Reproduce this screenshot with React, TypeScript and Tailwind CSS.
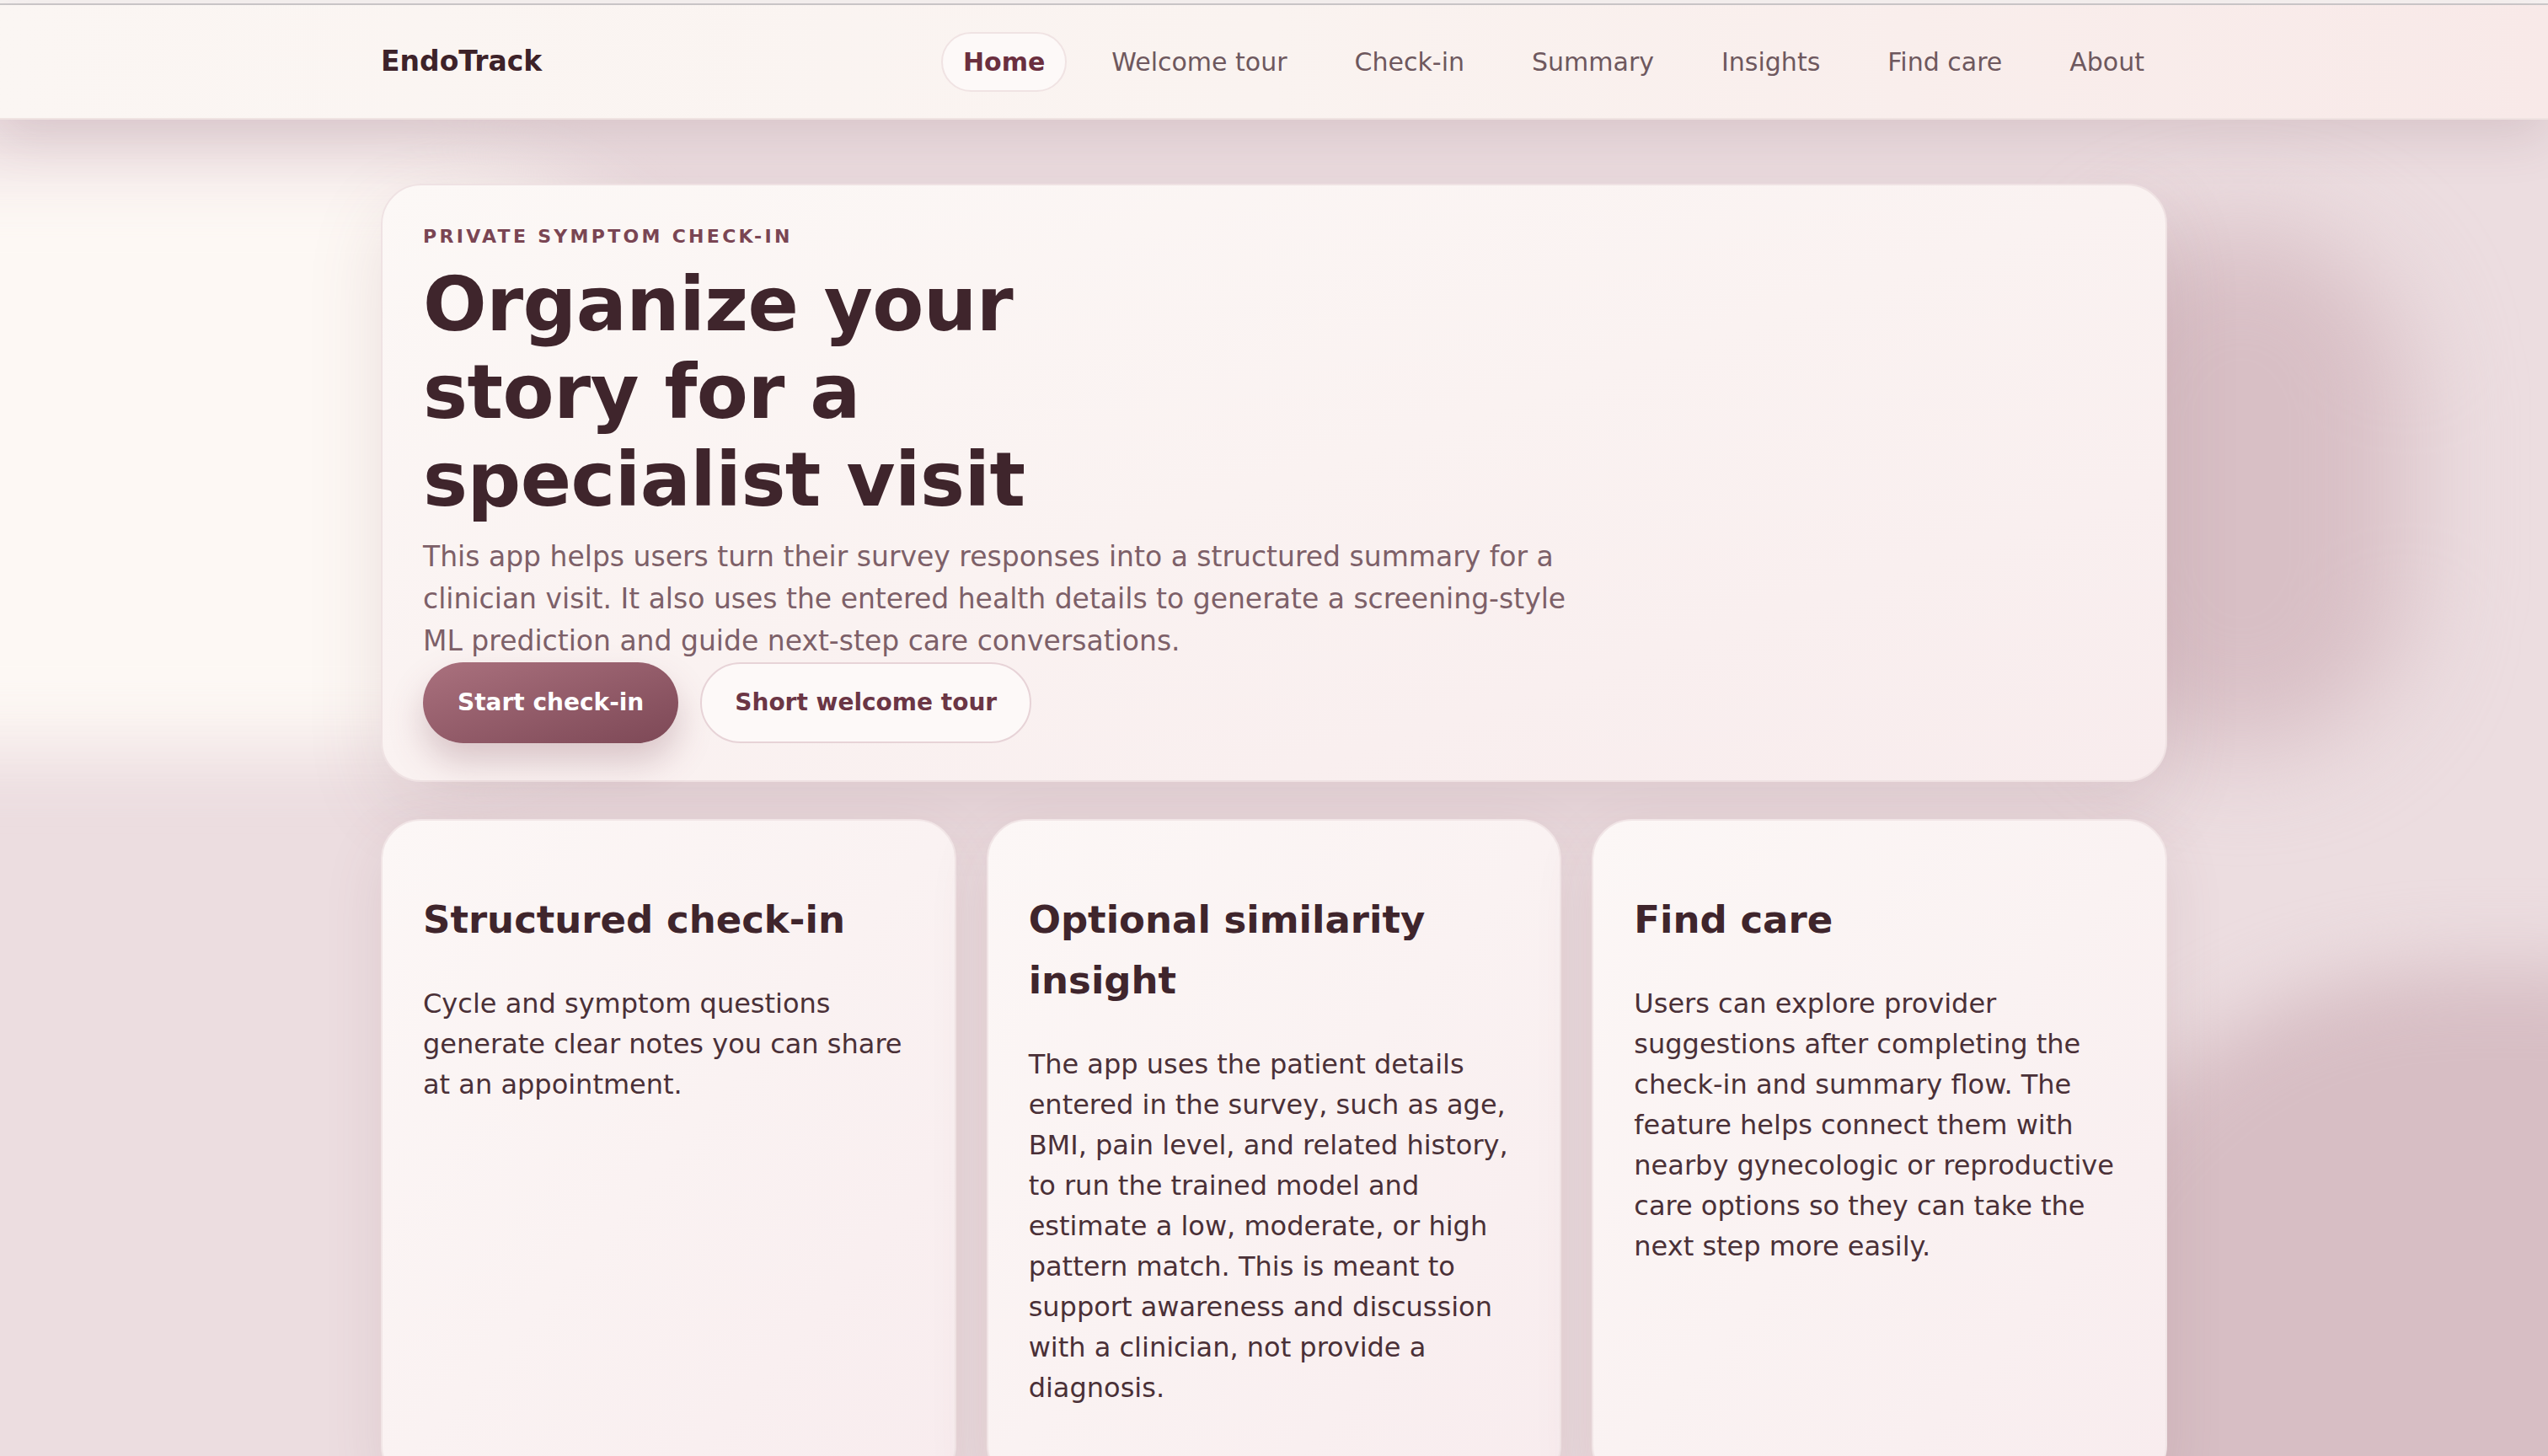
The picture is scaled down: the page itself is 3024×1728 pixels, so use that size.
import React from "react";

const navLinks = ["Home", "Welcome tour", "Check-in", "Summary", "Insights", "Find care", "About"];

const features = [
  {
    title: ["Structured check-in"],
    body: ["Cycle and symptom questions", "generate clear notes you can share", "at an appointment."],
  },
  {
    title: ["Optional similarity", "insight"],
    body: [
      "The app uses the patient details",
      "entered in the survey, such as age,",
      "BMI, pain level, and related history,",
      "to run the trained model and",
      "estimate a low, moderate, or high",
      "pattern match. This is meant to",
      "support awareness and discussion",
      "with a clinician, not provide a",
      "diagnosis.",
    ],
  },
  {
    title: ["Find care"],
    body: [
      "Users can explore provider",
      "suggestions after completing the",
      "check-in and summary flow. The",
      "feature helps connect them with",
      "nearby gynecologic or reproductive",
      "care options so they can take the",
      "next step more easily.",
    ],
  },
];

function Lines({ lines }: { lines: string[] }) {
  return (
    <>
      {lines.map((l, i) => (
        <span key={i} className="block whitespace-nowrap">
          {l}
        </span>
      ))}
    </>
  );
}

export default function App() {
  const active = "Home";

  return (
    <div className="relative min-h-screen overflow-hidden bg-[#ecdde0] font-['DejaVu_Sans',sans-serif] text-[#3f252c]">
      {/* soft background glows */}
      <div className="pointer-events-none absolute left-[-520px] top-[200px] h-[690px] w-[1380px] rounded-full bg-[#fdf8f4] blur-[45px]" />
      <div className="pointer-events-none absolute left-[2460px] top-[270px] h-[620px] w-[400px] rounded-full bg-[#d8bfc5] blur-[60px]" />
      <div className="pointer-events-none absolute left-[2420px] top-[1150px] h-[1000px] w-[1100px] rounded-[45%] bg-[#d7bec4] blur-[45px]" />

      <div className="relative h-[4px] bg-[#f7f3f2]" />
      <div className="relative h-[2px] bg-[#cdcacb]" />

      <header className="relative z-10 h-[136px] border-b-2 border-[#efe3e1] bg-gradient-to-r from-[#fbf6f3] via-[#faf3f0] to-[#f8e9e8] shadow-[0_20px_60px_rgba(110,75,85,0.16)]">
        <div className="mx-auto flex h-full w-[2120px] items-center justify-between">
          <div className="text-[33px] font-bold text-[#3d2229]">EndoTrack</div>
          <nav className="flex items-center gap-[26px]">
            {navLinks.map((link) => (
              <a
                key={link}
                href="#"
                className={
                  link === active
                    ? "flex h-[71px] items-center rounded-full border-2 border-[#f0e3e3] bg-[#fdf9f8] px-[24px] text-[30px] font-bold text-[#6b2f3f]"
                    : "flex h-[71px] items-center rounded-full border-2 border-transparent px-[25px] text-[30px] text-[#6e585e]"
                }
              >
                {link}
              </a>
            ))}
          </nav>
        </div>
      </header>

      <main className="relative mx-auto w-[2120px] pb-[60px] pt-[76px]">
        <section className="rounded-[48px] border-2 border-[#efe2e3] bg-gradient-to-br from-[#fcf8f6] via-[#faf2f1] to-[#f8eced] px-[48px] pb-[44px] pt-[45px] shadow-[0_30px_90px_rgba(120,70,85,0.14)]">
          <p className="text-[22px] font-bold uppercase leading-[32px] tracking-[3.3px] text-[#7a4553]">
            Private symptom check-in
          </p>
          <h1 className="mt-[12px] text-[89px] font-bold leading-[104px] tracking-[-0.5px] text-[#3f252c]">
            <Lines lines={["Organize your", "story for a", "specialist visit"]} />
          </h1>
          <p className="mt-[15px] text-[33px] leading-[50px] text-[#7d6068]">
            <Lines
              lines={[
                "This app helps users turn their survey responses into a structured summary for a",
                "clinician visit. It also uses the entered health details to generate a screening-style",
                "ML prediction and guide next-step care conversations.",
              ]}
            />
          </p>
          <div className="flex gap-[26px]">
            <button className="h-[96px] rounded-full bg-gradient-to-br from-[#aa717e] to-[#7d4856] px-[41px] text-[28px] font-bold text-white shadow-[0_22px_40px_rgba(125,70,85,0.26)]">
              Start check-in
            </button>
            <button className="h-[96px] rounded-full border-2 border-[#e7d3d7] bg-[#fdf9f8] px-[39px] text-[28px] font-bold text-[#6b3645]">
              Short welcome tour
            </button>
          </div>
        </section>

        <div className="mt-[44px] grid grid-cols-3 gap-[36px]">
          {features.map((f) => (
            <article
              key={f.title[0]}
              className="rounded-[48px] border-2 border-[#f1e5e6] bg-gradient-to-br from-[#fcf7f6] via-[#faf2f2] to-[#f8ecee] px-[48px] pb-[90px] pt-[82px] shadow-[0_24px_70px_rgba(120,70,85,0.12)]"
            >
              <h3 className="text-[45px] font-bold leading-[72px] text-[#3f252c]">
                <Lines lines={f.title} />
              </h3>
              <p className="mt-[39px] text-[32px] leading-[48px] text-[#4a3037]">
                <Lines lines={f.body} />
              </p>
            </article>
          ))}
        </div>
      </main>
    </div>
  );
}
